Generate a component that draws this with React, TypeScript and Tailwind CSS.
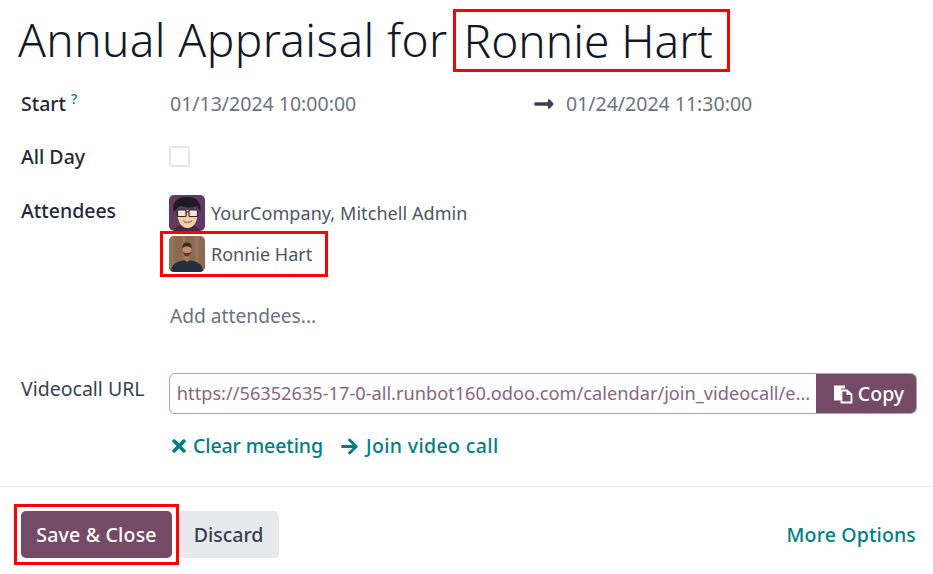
import { FaArrowRight, FaLongArrowAltRight, FaTimes } from "react-icons/fa";

function MitchellAvatar() {
  return (
    <svg viewBox="0 0 36 36" className="w-9 h-9 rounded-[5px]">
      <rect width="36" height="36" fill="#5f3a63" />
      <path d="M5 36c1-4 6-6 13-6s12 2 13 6z" fill="#43284a" />
      <path d="M8 15c0 11 4 18 10.500 18S29 26 29 15z" fill="#f6cfa9" />
      <path d="M5 17C2 8 8 1 19 2c9 0 14 6 12 15-1-3-2-5-3-6-5 2-11 2-16 0-3 1-5 3-7 6z" fill="#1d1a22" />
      <rect x="8.500" y="15" width="8.500" height="6.500" rx="1" fill="#fff" fillOpacity=".45" stroke="#2b2730" strokeWidth="1.200" />
      <rect x="20" y="15" width="8.500" height="6.500" rx="1" fill="#fff" fillOpacity=".45" stroke="#2b2730" strokeWidth="1.200" />
      <path d="M17 17h3" stroke="#2b2730" strokeWidth="1.200" />
      <path d="M14 25.500c2 2 7 2 9 0-1 3-8 3-9 0z" fill="#fff" stroke="#7a4b35" strokeWidth=".6" />
    </svg>
  );
}

function RonnieAvatar() {
  return (
    <svg viewBox="0 0 36 36" className="w-9 h-9 rounded-[5px]">
      <rect width="36" height="36" fill="#8a6a52" />
      <path d="M0 0h5v36H0zM13 0h3v36h-3zM26 0h4v36h-4z" fill="#94745a" />
      <path d="M2 36c0-8 5-11 16-12 11 1 16 4 16 12z" fill="#22303f" />
      <path d="M15.500 19h5v5l-2.500 2-2.500-2z" fill="#b0775c" />
      <ellipse cx="18" cy="14" rx="4.500" ry="6" fill="#c48f73" />
      <path d="M13.500 13c-.5-4 1-6.500 4.500-6.500s5 2.500 4.500 6.500c-1-2-2-2.500-4.500-2.500s-3.500.5-4.500 2.500z" fill="#3b2a20" />
      <path d="M13.500 15c1 4 3 5.500 4.500 5.500s3.500-1.500 4.500-5.500c-1 1.500-2.500 2-4.500 2s-3.500-.5-4.500-2z" fill="#5a3d2e" />
    </svg>
  );
}

function CopyIcon() {
  return (
    <svg viewBox="0 0 20 20" className="w-5 h-5" fill="none">
      <path d="M1 1.500h11v3H8v12H1z" fill="#fff" />
      <path d="M8.500 6.500h5.500l4.500 4v8h-10z" fill="#744a64" stroke="#fff" strokeWidth="1.800" />
      <path d="M13.500 6.500v4.500h5z" fill="#fff" />
    </svg>
  );
}

export default function App() {
  return (
    <div className="w-[933px] h-[574px] bg-white overflow-hidden text-[19.5px] text-[#374151] font-['Noto_Sans',sans-serif]">
      <div className="pl-[18px] h-[81px] flex items-start text-[#111827]">
        <h1 className="text-[46px] font-light leading-[60px] mt-[9px] flex">
          <span className="tracking-[0.4px]">Annual Appraisal for</span>
          <span className="border-[3px] border-[#ff0000] ml-[5px] h-[63px] pl-[8px] pr-[14px] leading-[57px]">Ronnie Hart</span>
        </h1>
      </div>

      <div className="pl-[21px] pr-4">
        <div className="flex h-[46px] items-center">
          <div className="w-[149px] font-medium text-[#1f2937]">
            Start<sup className="text-[14px] text-[#017e84] ml-[5px]">?</sup>
          </div>
          <div className="w-[363px] text-[#6b7280]">01/13/2024 10:00:00</div>
          <FaLongArrowAltRight className="w-[22px] h-[22px] text-[#374151] mr-[11px]" />
          <div className="text-[#6b7280]">01/24/2024 11:30:00</div>
        </div>

        <div className="flex h-[46px] items-center mt-[7px]">
          <div className="w-[148px] font-medium text-[#1f2937]">All Day</div>
          <div className="w-[21px] h-[21px] border-2 border-[#e5e7eb] rounded-[2px] -mt-[2px]" />
        </div>

        <div className="flex mt-[15px]">
          <div className="w-[148px] font-medium text-[#1f2937] leading-[28px] pt-[2px]">Attendees</div>
          <div className="flex flex-col items-start">
            <div className="flex items-center gap-[6px] h-[36px] text-[#4b5563]">
              <MitchellAvatar />
              <span className="text-[18px] pt-[1px] tracking-[0.07px]">YourCompany, Mitchell Admin</span>
            </div>
            <div className="flex items-center gap-[6px] h-[46px] -ml-[9px] pl-[6px] pr-[13px] border-[3px] border-[#ff0000] text-[#4b5563]">
              <RonnieAvatar />
              <span className="text-[18px]">Ronnie Hart</span>
            </div>
            <div className="text-[19.200px] text-[#6b7280] mt-[25px] ml-[1px] leading-[28px]">Add attendees...</div>
          </div>
        </div>

        <div className="flex mt-[43px]">
          <div className="w-[148px] leading-[28px] pt-[2px] text-[#374151]">Videocall URL</div>
          <div className="flex w-[749px] h-[41px] rounded-[6px] border border-[#b79fb2] overflow-hidden">
            <div className="flex-1 min-w-0 pl-[7px] pr-1 leading-[39px] text-[18.200px] text-[#8a6480] truncate">
              https://56352635-17-0-all.runbot160.odoo.com/calendar/join_videocall/e...
            </div>
            <button className="w-[100px] shrink-0 bg-[#744a64] text-white font-medium flex items-center justify-center gap-[5px] pl-[5px]">
              <CopyIcon />
              Copy
            </button>
          </div>
        </div>

        <div className="flex items-center h-[28px] mt-[18px] ml-[148px] text-[#017e84] font-medium">
          <FaTimes className="w-[20px] h-[20px] mr-[4px]" />
          <span className="tracking-[-0.1px]">Clear meeting</span>
          <FaArrowRight className="w-[19px] h-[19px] ml-[17px] mr-[7px]" />
          <span className="tracking-[0.36px]">Join video call</span>
        </div>
      </div>

      <div className="border-t border-[#e5e7eb] mt-[26px] pt-[17px] pl-[14px] pr-[17px] flex items-center">
        <div className="border-[3px] border-[#ff0000] p-[4px]">
          <button className="w-[151px] h-[47px] bg-[#744a64] text-white font-medium tracking-[0.2px] rounded-[5px] block">Save &amp; Close</button>
        </div>
        <button className="w-[100px] h-[47px] bg-[#e7e9ed] text-[#374151] font-medium rounded-[5px] pr-[1px]">Discard</button>
        <div className="ml-auto text-[#017e84] font-medium tracking-[0.15px]">More Options</div>
      </div>
    </div>
  );
}
